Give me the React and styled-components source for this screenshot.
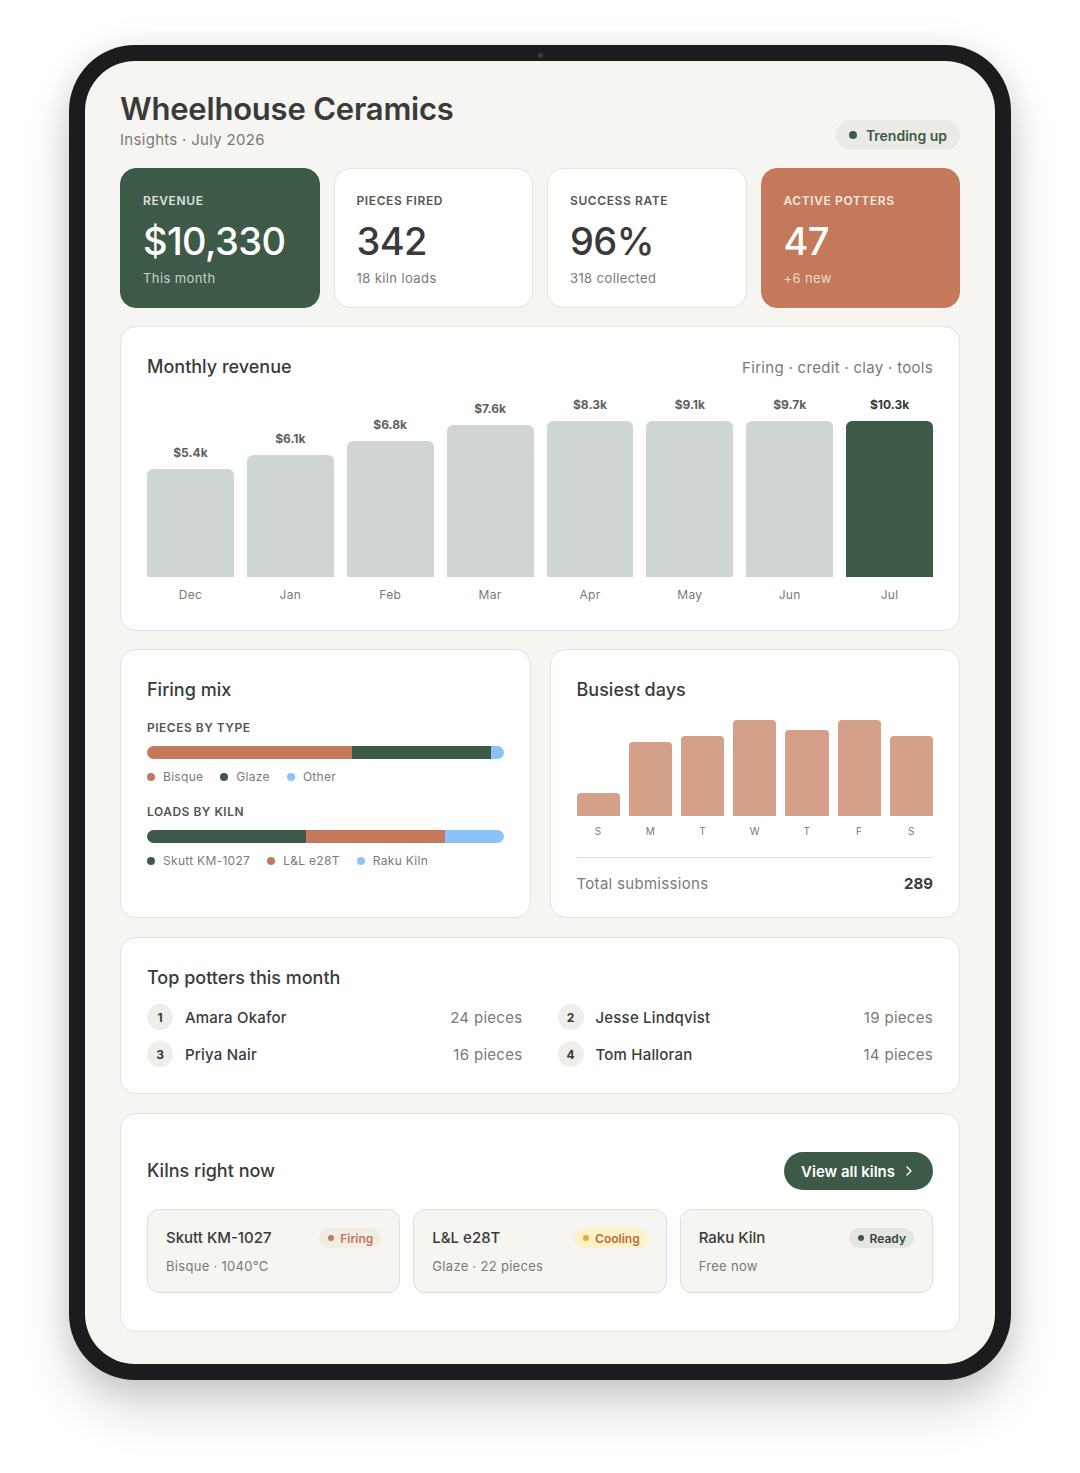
import React from "react";
import styled, { createGlobalStyle } from "styled-components";
import { ChevronRight } from "lucide-react";

const Global = createGlobalStyle`
  * { box-sizing: border-box; }
  html, body { margin: 0; padding: 0; background: #ffffff; }
  body { font-family: "Inter", "Open Sans", sans-serif; color: #3a3a3a; }
`;

const C = {
  green: "#3d5a48",
  clay: "#c47a5a",
  blue: "#8cc3f7",
  barGray: "#cfd6d1",
  rose: "#d4a08a",
  text: "#3a3a3a",
  muted: "#7a7a76",
  border: "#e4e2dc",
  screen: "#f6f5f1",
};

const Page = styled.div`
  padding: 45px 69px 93px;
  min-height: 1473px;
  background: #fff;
`;

const Device = styled.div`
  position: relative;
  width: 942px;
  height: 1335px;
  background: #1c1c1e;
  border-radius: 66px;
  padding: 16px;
  box-shadow: 0 30px 50px rgba(0, 0, 0, 0.14), 0 10px 30px rgba(0, 0, 0, 0.08),
    0 0 40px rgba(0, 0, 0, 0.05);
`;

const Camera = styled.div`
  position: absolute;
  top: 8px;
  left: 50%;
  width: 5px;
  height: 5px;
  margin-left: -2.5px;
  border-radius: 50%;
  background: #3a3a3c;
`;

const Screen = styled.div`
  height: 100%;
  background: ${C.screen};
  border-radius: 50px;
  padding: 29px 35px 32px;
  display: flex;
  flex-direction: column;
  overflow: hidden;
`;

const Header = styled.div`
  display: flex;
  justify-content: space-between;
  align-items: flex-end;
`;

const Title = styled.h1`
  margin: 0;
  font-size: 31px;
  line-height: 38px;
  font-weight: 600;
  letter-spacing: -0.2px;
  color: ${C.text};
`;

const Subtitle = styled.div`
  margin-top: 1px;
  font-size: 15px;
  line-height: 21px;
  letter-spacing: 0.3px;
  color: ${C.muted};
`;

const Pill = styled.div`
  display: flex;
  align-items: center;
  gap: 9px;
  height: 30px;
  padding: 0 13px;
  margin-bottom: 0;
  border-radius: 15px;
  background: #ebeae5;
  color: ${C.green};
  font-size: 14px;
  font-weight: 600;
`;

const Dot = styled.span`
  display: inline-block;
  width: ${(p) => p.$size || 8}px;
  height: ${(p) => p.$size || 8}px;
  border-radius: 50%;
  background: ${(p) => p.$color};
  flex: none;
`;

const Stats = styled.div`
  margin-top: 18px;
  display: grid;
  grid-template-columns: repeat(4, 1fr);
  gap: 14px;
`;

const StatCard = styled.div`
  height: 140px;
  border-radius: 16px;
  padding: 24px 22px;
  background: ${(p) => p.$bg || "#fff"};
  border: 1px solid ${(p) => (p.$bg ? p.$bg : C.border)};
  color: ${(p) => (p.$bg ? "#fff" : C.text)};
`;

const StatLabel = styled.div`
  font-size: 12px;
  line-height: 16px;
  font-weight: 600;
  letter-spacing: 0.6px;
  text-transform: uppercase;
  opacity: ${(p) => (p.$light ? 0.82 : 1)};
  color: ${(p) => (p.$light ? "#fff" : "#555552")};
`;

const StatValue = styled.div`
  margin-top: 9px;
  font-size: 38px;
  line-height: 46px;
  font-weight: 500;
  letter-spacing: -0.6px;
`;

const StatSub = styled.div`
  margin-top: 5px;
  font-size: 13px;
  line-height: 18px;
  letter-spacing: 0.4px;
  color: ${(p) => (p.$light ? "rgba(255,255,255,0.72)" : C.muted)};
`;

const Card = styled.div`
  background: #fff;
  border: 1px solid ${C.border};
  border-radius: 16px;
  padding: ${(p) => p.$pad || "28px 26px 27px"};
`;

const Section = styled(Card)`
  margin-top: ${(p) => p.$mt || 19}px;
`;

const CardHead = styled.div`
  display: flex;
  justify-content: space-between;
  align-items: center;
`;

const CardTitle = styled.h2`
  margin: 0;
  font-size: 18px;
  line-height: 24px;
  font-weight: 500;
  color: ${C.text};
`;

const HeadNote = styled.div`
  font-size: 15px;
  letter-spacing: 0.3px;
  color: ${C.muted};
`;

const Chart = styled.div`
  margin-top: 18px;
  display: flex;
  align-items: flex-end;
  gap: 13px;
`;

const Column = styled.div`
  flex: 1;
  display: flex;
  flex-direction: column;
  align-items: center;
`;

const BarValue = styled.div`
  font-size: 12px;
  line-height: 16px;
  font-weight: 700;
  color: ${(p) => (p.$active ? "#2f3b33" : "#5c615d")};
  margin-bottom: 8px;
`;

const Bar = styled.div`
  width: 100%;
  background: ${(p) => p.$color};
  border-radius: ${(p) => p.$r || 6}px ${(p) => p.$r || 6}px 0 0;
`;

const AxisLabel = styled.div`
  margin-top: ${(p) => p.$mt || 10}px;
  font-size: ${(p) => p.$size || 12}px;
  line-height: ${(p) => (p.$size ? p.$size + 4 : 16)}px;
  letter-spacing: 0.3px;
  color: ${C.muted};
`;

const Row2 = styled.div`
  margin-top: 18px;
  display: grid;
  grid-template-columns: 1fr 1fr;
  gap: 19px;
`;

const MixLabel = styled.div`
  margin-top: ${(p) => p.$mt}px;
  font-size: 12px;
  line-height: 16px;
  font-weight: 600;
  letter-spacing: 0.5px;
  color: #555552;
  text-transform: uppercase;
`;

const Stack = styled.div`
  margin-top: 10px;
  height: 13px;
  border-radius: 7px;
  overflow: hidden;
  display: flex;
`;

const Segment = styled.div`
  height: 100%;
  background: ${(p) => p.$color};
`;

const Legend = styled.div`
  margin-top: 10px;
  display: flex;
  gap: 17px;
  font-size: 12px;
  line-height: 16px;
  letter-spacing: 0.3px;
  color: ${C.muted};
`;

const LegendItem = styled.div`
  display: flex;
  align-items: center;
  gap: 8px;
`;

const DayChart = styled.div`
  margin-top: 18px;
  display: flex;
  gap: 9px;
  align-items: flex-end;
`;

const Divider = styled.div`
  margin-top: 19px;
  height: 1px;
  background: #dedcd6;
`;

const TotalRow = styled.div`
  margin-top: 15px;
  display: flex;
  justify-content: space-between;
  font-size: 15px;
  line-height: 21px;
  letter-spacing: 0.3px;
  color: ${C.muted};
`;

const TotalValue = styled.span`
  font-weight: 700;
  letter-spacing: 0;
  color: ${C.text};
`;

const PotterGrid = styled.div`
  margin-top: 14px;
  display: grid;
  grid-template-columns: 1fr 1fr;
  column-gap: 35px;
  row-gap: 11px;
`;

const Potter = styled.div`
  display: flex;
  align-items: center;
  height: 26px;
`;

const Rank = styled.div`
  width: 26px;
  height: 26px;
  border-radius: 50%;
  background: #efeee9;
  display: flex;
  align-items: center;
  justify-content: center;
  font-size: 12px;
  font-weight: 700;
  color: ${C.text};
  flex: none;
`;

const PotterName = styled.div`
  margin-left: 12px;
  flex: 1;
  font-size: 15px;
  font-weight: 500;
  letter-spacing: 0.2px;
  color: ${C.text};
`;

const PotterCount = styled.div`
  font-size: 15px;
  letter-spacing: 0.3px;
  color: ${C.muted};
`;

const Button = styled.button`
  height: 38px;
  padding: 0 16px 0 17px;
  border: none;
  border-radius: 19px;
  background: ${C.green};
  color: #fff;
  font-family: inherit;
  font-size: 15px;
  font-weight: 600;
  display: flex;
  align-items: center;
  gap: 6px;
`;

const KilnGrid = styled.div`
  margin-top: 19px;
  display: grid;
  grid-template-columns: repeat(3, 1fr);
  gap: 13px;
`;

const Kiln = styled.div`
  height: 84px;
  background: ${C.screen};
  border: 1px solid #e0ded8;
  border-radius: 12px;
  padding: 18px 18px 0;
`;

const KilnTop = styled.div`
  display: flex;
  justify-content: space-between;
  align-items: center;
`;

const KilnName = styled.div`
  font-size: 15px;
  line-height: 20px;
  font-weight: 500;
  color: ${C.text};
`;

const KilnSub = styled.div`
  margin-top: 9px;
  font-size: 13px;
  line-height: 18px;
  letter-spacing: 0.3px;
  color: ${C.muted};
`;

const Badge = styled.div`
  height: 20px;
  padding: 0 8px 0 9px;
  border-radius: 10px;
  display: flex;
  align-items: center;
  gap: 6px;
  font-size: 12px;
  font-weight: 600;
  background: ${(p) => p.$bg};
  color: ${(p) => p.$fg};
`;

const months = [
  ["Dec", "$5.4k", 108],
  ["Jan", "$6.1k", 122],
  ["Feb", "$6.8k", 136],
  ["Mar", "$7.6k", 152],
  ["Apr", "$8.3k", 156],
  ["May", "$9.1k", 156],
  ["Jun", "$9.7k", 156],
  ["Jul", "$10.3k", 156],
];

const days = [
  ["S", 23],
  ["M", 74],
  ["T", 80],
  ["W", 96],
  ["T", 86],
  ["F", 96],
  ["S", 80],
];

const potters = [
  [1, "Amara Okafor", 24],
  [2, "Jesse Lindqvist", 19],
  [3, "Priya Nair", 16],
  [4, "Tom Halloran", 14],
];

const kilns = [
  { name: "Skutt KM-1027", sub: "Bisque · 1040°C", status: "Firing", bg: "#f1ece4", fg: "#c4785a", dot: "#c4785a" },
  { name: "L&L e28T", sub: "Glaze · 22 pieces", status: "Cooling", bg: "#fdf2c9", fg: "#b86f3e", dot: "#f5a623" },
  { name: "Raku Kiln", sub: "Free now", status: "Ready", bg: "#e5e5e1", fg: "#34493c", dot: C.green },
];

export default function App() {
  return (
    <Page>
      <Global />
      <Device>
        <Camera />
        <Screen>
          <Header>
            <div>
              <Title>Wheelhouse Ceramics</Title>
              <Subtitle>Insights · July 2026</Subtitle>
            </div>
            <Pill>
              <Dot $color={C.green} />
              Trending up
            </Pill>
          </Header>

          <Stats>
            <StatCard $bg={C.green}>
              <StatLabel $light>Revenue</StatLabel>
              <StatValue>$10,330</StatValue>
              <StatSub $light>This month</StatSub>
            </StatCard>
            <StatCard>
              <StatLabel>Pieces fired</StatLabel>
              <StatValue>342</StatValue>
              <StatSub>18 kiln loads</StatSub>
            </StatCard>
            <StatCard>
              <StatLabel>Success rate</StatLabel>
              <StatValue>96%</StatValue>
              <StatSub>318 collected</StatSub>
            </StatCard>
            <StatCard $bg={C.clay}>
              <StatLabel $light>Active potters</StatLabel>
              <StatValue>47</StatValue>
              <StatSub $light>+6 new</StatSub>
            </StatCard>
          </Stats>

          <Section $mt={18}>
            <CardHead>
              <CardTitle>Monthly revenue</CardTitle>
              <HeadNote>Firing · credit · clay · tools</HeadNote>
            </CardHead>
            <Chart>
              {months.map(([m, v, h], i) => {
                const active = i === months.length - 1;
                return (
                  <Column key={m}>
                    <BarValue $active={active}>{v}</BarValue>
                    <Bar $color={active ? C.green : C.barGray} style={{ height: h }} />
                    <AxisLabel>{m}</AxisLabel>
                  </Column>
                );
              })}
            </Chart>
          </Section>

          <Row2>
            <Card>
              <CardTitle>Firing mix</CardTitle>
              <MixLabel $mt={18}>Pieces by type</MixLabel>
              <Stack>
                <Segment $color={C.clay} style={{ width: "57.4%" }} />
                <Segment $color={C.green} style={{ width: "39%" }} />
                <Segment $color={C.blue} style={{ flex: 1 }} />
              </Stack>
              <Legend>
                <LegendItem><Dot $color={C.clay} />Bisque</LegendItem>
                <LegendItem><Dot $color={C.green} />Glaze</LegendItem>
                <LegendItem><Dot $color={C.blue} />Other</LegendItem>
              </Legend>
              <MixLabel $mt={19}>Loads by kiln</MixLabel>
              <Stack>
                <Segment $color={C.green} style={{ width: "44.5%" }} />
                <Segment $color={C.clay} style={{ width: "39%" }} />
                <Segment $color={C.blue} style={{ flex: 1 }} />
              </Stack>
              <Legend>
                <LegendItem><Dot $color={C.green} />Skutt KM-1027</LegendItem>
                <LegendItem><Dot $color={C.clay} />L&amp;L e28T</LegendItem>
                <LegendItem><Dot $color={C.blue} />Raku Kiln</LegendItem>
              </Legend>
            </Card>

            <Card $pad="28px 26px 23px">
              <CardTitle>Busiest days</CardTitle>
              <DayChart>
                {days.map(([d, h], i) => (
                  <Column key={i}>
                    <Bar $color={C.rose} $r={4} style={{ height: h }} />
                    <AxisLabel $mt={8} $size={10}>{d}</AxisLabel>
                  </Column>
                ))}
              </DayChart>
              <Divider />
              <TotalRow>
                <span>Total submissions</span>
                <TotalValue>289</TotalValue>
              </TotalRow>
            </Card>
          </Row2>

          <Section $pad="28px 26px 26px">
            <CardTitle>Top potters this month</CardTitle>
            <PotterGrid>
              {potters.map(([r, n, c]) => (
                <Potter key={r}>
                  <Rank>{r}</Rank>
                  <PotterName>{n}</PotterName>
                  <PotterCount>{c} pieces</PotterCount>
                </Potter>
              ))}
            </PotterGrid>
          </Section>

          <Section $pad="38px 26px 38px">
            <CardHead>
              <CardTitle>Kilns right now</CardTitle>
              <Button>
                View all kilns
                <ChevronRight size={16} strokeWidth={2} />
              </Button>
            </CardHead>
            <KilnGrid>
              {kilns.map((k) => (
                <Kiln key={k.name}>
                  <KilnTop>
                    <KilnName>{k.name}</KilnName>
                    <Badge $bg={k.bg} $fg={k.fg}>
                      <Dot $color={k.dot} $size={6} />
                      {k.status}
                    </Badge>
                  </KilnTop>
                  <KilnSub>{k.sub}</KilnSub>
                </Kiln>
              ))}
            </KilnGrid>
          </Section>
        </Screen>
      </Device>
    </Page>
  );
}
